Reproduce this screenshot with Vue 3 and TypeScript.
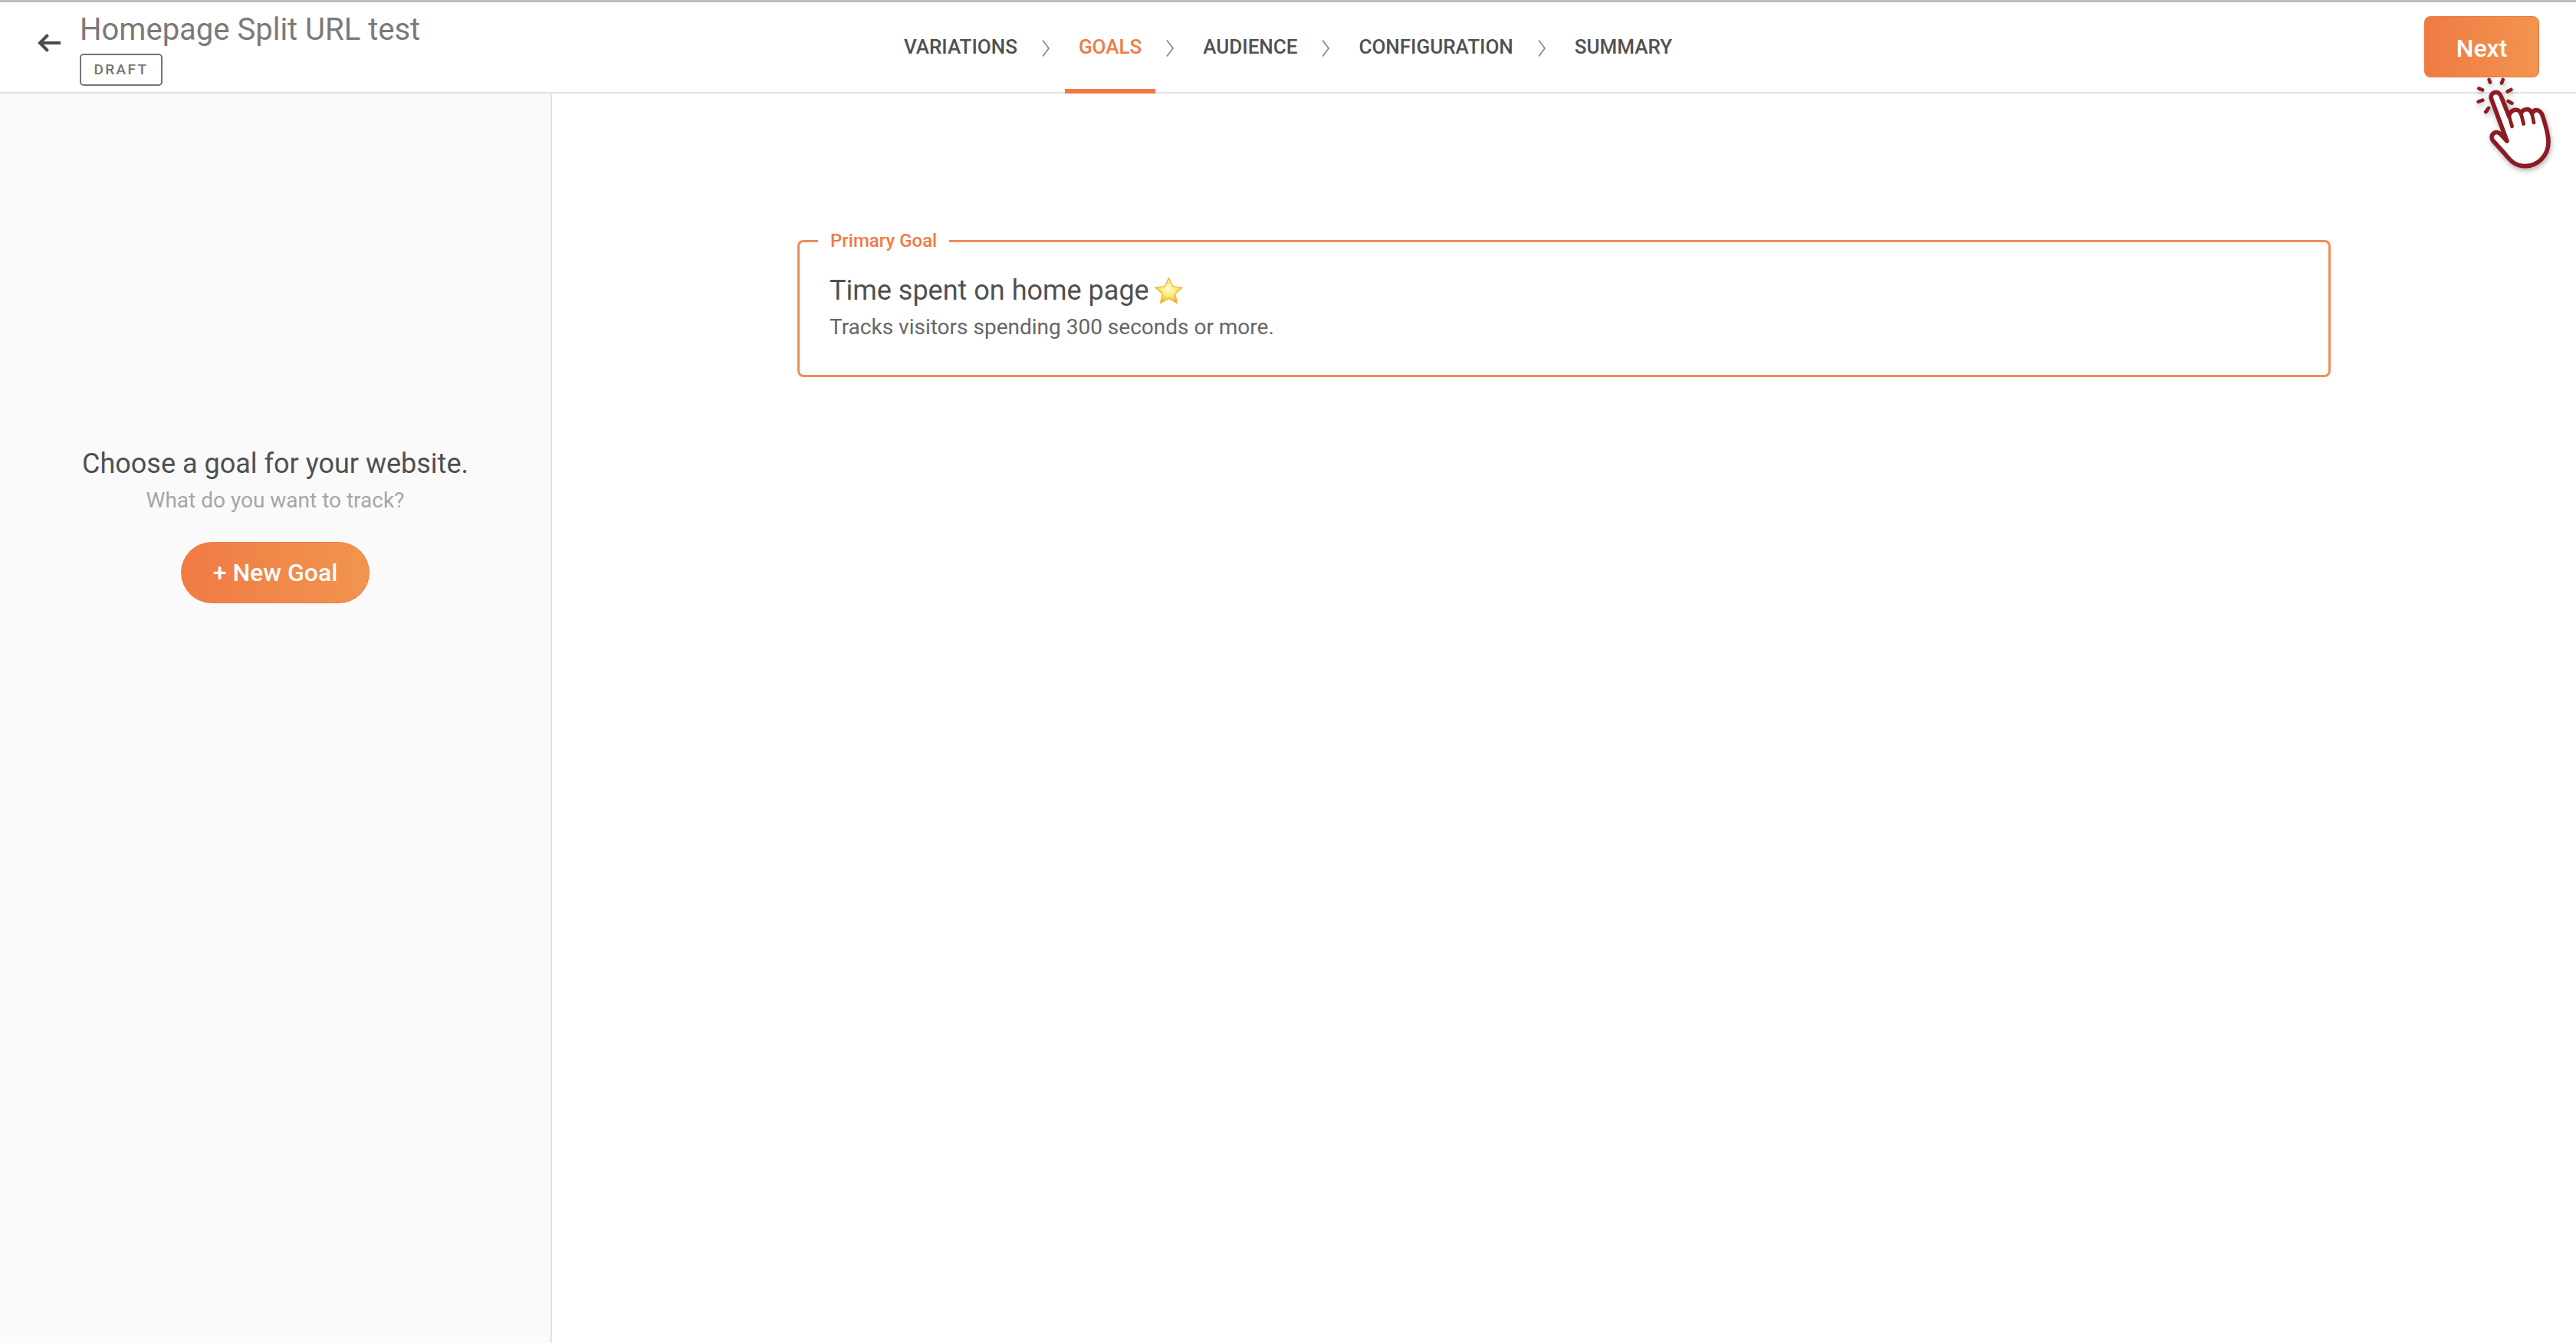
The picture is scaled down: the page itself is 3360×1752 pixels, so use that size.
<template>
  <div class="page">
    <header class="topbar">
      <div class="title-block">
        <button class="back-btn" aria-label="Back">
          <svg viewBox="0 0 32 32" width="32" height="32" fill="none" stroke="#4a4a4a" stroke-width="4">
            <path d="M31 16H4M14.500 5.500 4 16l10.500 10.500" />
          </svg>
        </button>
        <div class="title-text">
          <h1>Homepage Split URL test</h1>
          <span class="badge">DRAFT</span>
        </div>
      </div>

      <nav class="steps">
        <template v-for="(step, i) in steps" :key="step">
          <a class="step" :class="{ active: step === current }">{{ step }}</a>
          <svg v-if="i < steps.length - 1" class="chevron" viewBox="0 0 12 24" width="12" height="24" fill="none" stroke="#8a8a8a" stroke-width="1.800">
            <path d="M2 1.500 10 12 2 22.500" />
          </svg>
        </template>
      </nav>

      <button class="next-btn">Next</button>
    </header>

    <div class="body">
      <aside class="sidebar">
        <h2>Choose a goal for your website.</h2>
        <p>What do you want to track?</p>
        <button class="new-goal">+ New Goal</button>
      </aside>

      <main class="content">
        <fieldset class="goal-card">
          <legend>Primary Goal</legend>
          <div class="goal-name">
            Time spent on home page
            <svg class="star" viewBox="0 0 40 38" width="39" height="37">
              <defs>
                <radialGradient id="starFill" cx="50%" cy="42%" r="60%">
                  <stop offset="0%" stop-color="#fffbd2" />
                  <stop offset="50%" stop-color="#ffe873" />
                  <stop offset="100%" stop-color="#f7a815" />
                </radialGradient>
              </defs>
              <path d="M20 1.500 25.300 13l12.700 1.400-9.500 8.500 2.700 12.600L20 29.100 8.800 35.500l2.700-12.600L2 14.400 14.700 13z" fill="url(#starFill)" stroke="#efb02e" stroke-width="1.200" stroke-linejoin="round" />
            </svg>
          </div>
          <div class="goal-desc">Tracks visitors spending 300 seconds or more.</div>
        </fieldset>
      </main>
    </div>

    <!-- pointer drawn over the Next button -->
    <svg class="pointer" viewBox="0 0 720 720" width="240" height="240" fill="none" stroke="#8c1c24" stroke-linecap="round" stroke-linejoin="round">
      <path d="M450 552 388 385C383 360 418 350 427 378L458 455C462 428 495 420 505 445 510 425 540 420 548 445 555 425 580 425 590 455 600 490 612 520 612 555 612 610 570 650 520 650 480 650 460 625 440 600L395 550C380 530 405 505 425 525Z" fill="#fff" stroke-width="17" />
      <path d="M458 455 470 495M505 445 515 485M548 445 555 480" stroke-width="14" />
      <path d="M380 312 384 322M434 312 429 325M340 346 354 352M466 351 452 358M338 398 355 392M455 396 469 404M367 438 378 423" stroke-width="14" />
    </svg>
  </div>
</template>

<script setup lang="ts">
const steps: string[] = ['VARIATIONS', 'GOALS', 'AUDIENCE', 'CONFIGURATION', 'SUMMARY']
const current = 'GOALS'
</script>

<style>
html,
body {
  margin: 0;
  background: #fff;
}
</style>

<style scoped>
.page {
  position: relative;
  display: flex;
  flex-direction: column;
  height: 1752px;
  width: 3360px;
  overflow: hidden;
  font-family: Roboto, sans-serif;
  color: #4a4a4a;
}

.topbar {
  display: grid;
  grid-template-columns: 1fr auto 1fr;
  align-items: center;
  height: 122px;
  box-sizing: border-box;
  border-top: 3px solid #bdbdbd;
  border-bottom: 2px solid #e2e2e2;
  padding: 0 48px 0 48px;
  background: #fff;
}

.title-block {
  display: flex;
  align-items: center;
  gap: 24px;
}

.back-btn {
  display: flex;
  padding: 0;
  border: none;
  background: none;
  margin-top: -11px;
}

.title-text {
  display: flex;
  flex-direction: column;
  align-items: flex-start;
  gap: 8px;
  padding-top: 4px;
}

h1 {
  margin: 0;
  font-size: 40px;
  line-height: 46px;
  font-weight: 400;
  color: #7a7a7a;
}

.badge {
  display: block;
  box-sizing: border-box;
  width: 108px;
  height: 42px;
  line-height: 38px;
  text-align: center;
  border: 2px solid #757575;
  border-radius: 5px;
  font-size: 19px;
  font-weight: 500;
  letter-spacing: 2.400px;
  color: #757575;
}

.steps {
  display: flex;
  align-items: center;
  height: 100%;
  font-size: 26px;
  font-weight: 500;
}

.step {
  position: relative;
  display: flex;
  align-items: center;
  height: 100%;
  padding-bottom: 2px;
  box-sizing: border-box;
  color: #505050;
}

.step.active {
  color: #f07a43;
}

.step.active::after {
  content: '';
  position: absolute;
  left: -18px;
  right: -18px;
  bottom: -2px;
  height: 6px;
  background: #f07a43;
}

.chevron {
  margin: 3px 37px 0 31px;
}

.next-btn {
  justify-self: end;
  width: 150px;
  height: 80px;
  margin-top: -1px;
  padding-top: 4px;
  border: 1px solid #ee7a40;
  border-radius: 8px;
  background: linear-gradient(90deg, #ef7b43, #f29450);
  color: #fff;
  font-family: inherit;
  font-size: 32px;
  font-weight: 500;
}

.body {
  flex: 1;
  display: flex;
  min-height: 0;
}

.sidebar {
  box-sizing: border-box;
  width: 720px;
  background: #fafafa;
  border-right: 2px solid #e2e2e2;
  display: flex;
  flex-direction: column;
  align-items: center;
  padding-top: 459px;
}

h2 {
  margin: 0;
  font-size: 36px;
  line-height: 48px;
  font-weight: 400;
  color: #505050;
}

.sidebar p {
  margin: 6px 0 0;
  font-size: 28px;
  line-height: 36px;
  color: #a6a6a6;
}

.new-goal {
  width: 246px;
  height: 80px;
  margin-top: 36px;
  border: 1px solid #ee7f47;
  border-radius: 40px;
  background: linear-gradient(90deg, #ef7b43, #f29450);
  color: #fff;
  font-family: inherit;
  font-size: 32px;
  font-weight: 500;
}

.content {
  flex: 1;
  padding: 178px 320px 0 320px;
}

.goal-card {
  margin: 0;
  box-sizing: border-box;
  height: 192px;
  min-width: 0;
  padding: 0 39px;
  border: 3px solid #f38a5a;
  border-radius: 8px;
}

legend {
  margin-left: -15px;
  padding: 0 16px;
  font-size: 24px;
  line-height: 28px;
  font-weight: 500;
  color: #f07a43;
}

.goal-name {
  display: flex;
  align-items: center;
  gap: 6px;
  margin-top: 27px;
  font-size: 36px;
  line-height: 48px;
  color: #505050;
}

.goal-desc {
  margin-top: 6px;
  font-size: 28px;
  line-height: 36px;
  color: #666;
}

.pointer {
  position: absolute;
  left: 3120px;
  top: 0;
  pointer-events: none;
  filter: drop-shadow(1px 3px 3px rgba(0, 0, 0, 0.3));
}
</style>
